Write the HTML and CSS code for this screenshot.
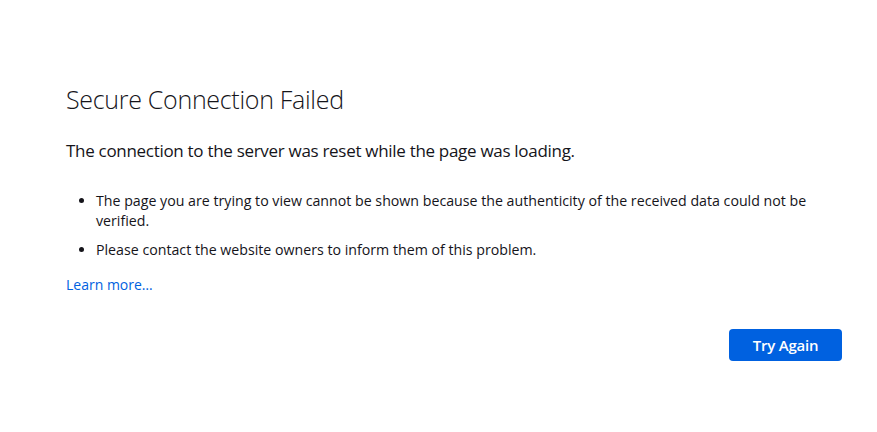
FILE: index.html
```html
<!DOCTYPE html>
<html lang="en">
<head>
<meta charset="utf-8">
<title>Secure Connection Failed</title>
<link rel="stylesheet" href="styles.css">
</head>
<body>
<main class="container">
  <h1 class="title">Secure Connection Failed</h1>
  <p class="short-desc">The connection to the server was reset while the page was loading.</p>
  <ul class="long-desc">
    <li>The page you are trying to view cannot be shown because the authenticity of the received data could not be verified.</li>
    <li>Please contact the website owners to inform them of this problem.</li>
  </ul>
  <a class="learn-more" href="#">Learn more…</a>
  <div class="actions">
    <button class="primary">Try Again</button>
  </div>
</main>
</body>
</html>
```

FILE: styles.css
```css
html, body {
  margin: 0;
  padding: 0;
  background: #ffffff;
}
body {
  font-family: "Open Sans", "Noto Sans", sans-serif;
  color: #15141a;
  font-size: 15px;
}
.container {
  padding: 81px 35px 0 66px;
}
.title {
  margin: 0;
  font-size: 25px;
  font-weight: 300;
  line-height: 36px;
  letter-spacing: -0.3px;
}
.short-desc {
  margin: 22px 0 0;
  font-size: 17px;
  line-height: 24px;
  letter-spacing: -0.3px;
}
.long-desc {
  margin: 28px 0 0;
  padding-left: 30px;
  list-style: disc;
}
.long-desc li {
  font-size: 14.2px;
  line-height: 20px;
  margin-bottom: 9px;
  padding-right: 30px;
}
.learn-more {
  display: inline-block;
  margin-top: 6px;
  font-size: 14px;
  line-height: 20px;
  color: #0061e0;
  text-decoration: none;
}
.actions {
  display: flex;
  justify-content: flex-end;
  margin-top: 34px;
}
.primary {
  width: 113px;
  height: 32px;
  border: none;
  border-radius: 4px;
  background: #0061e0;
  color: #ffffff;
  font-family: "Open Sans", "Noto Sans", sans-serif;
  font-size: 15px;
  font-weight: 600;
  padding: 0;
  letter-spacing: -0.2px;
}
```
